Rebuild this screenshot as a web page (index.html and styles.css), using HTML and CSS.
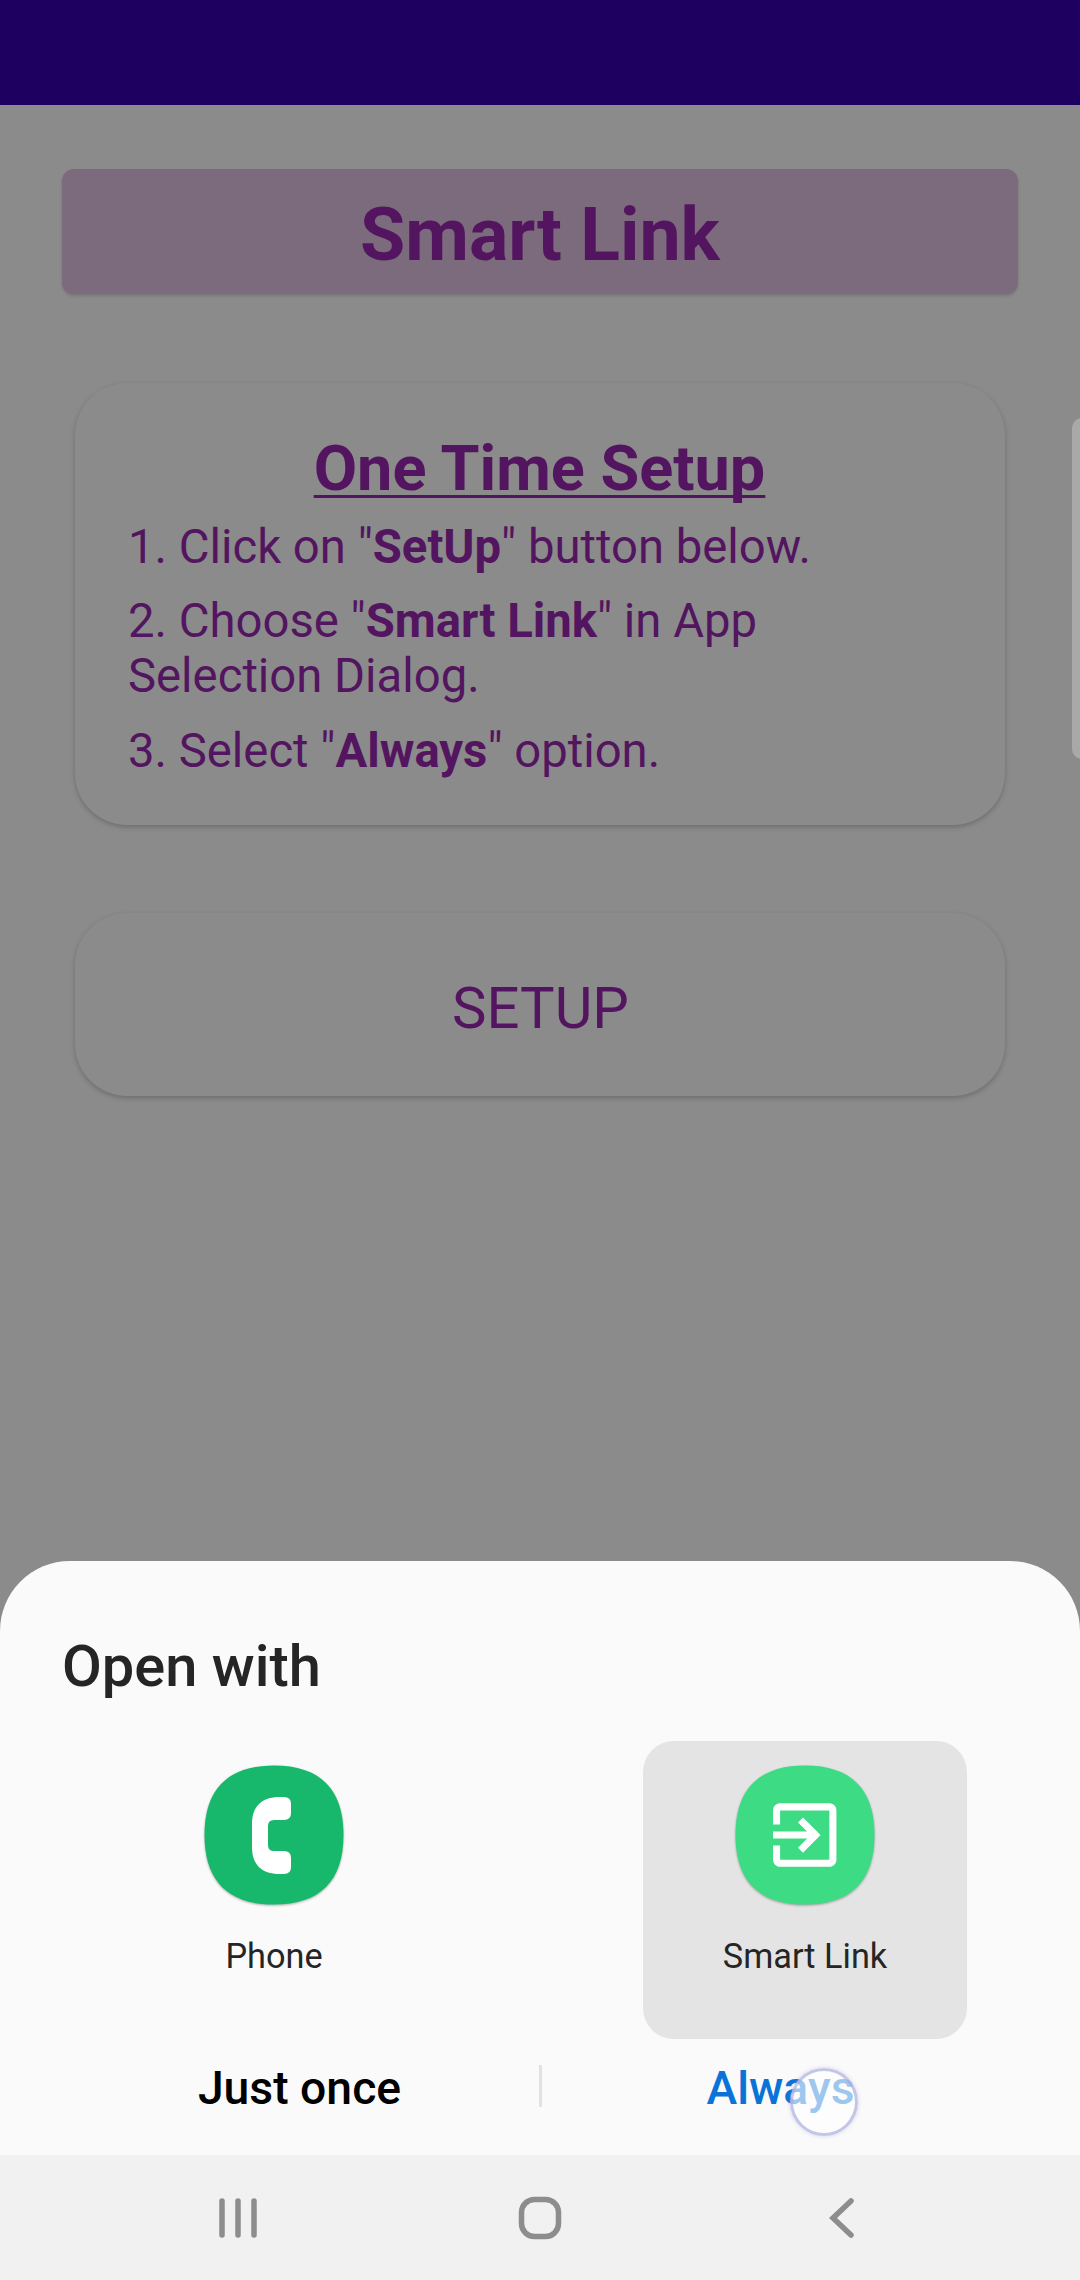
FILE: index.html
```html
<!DOCTYPE html>
<html lang="en">
  <head>
    <meta charset="UTF-8" />
    <meta name="viewport" content="width=device-width, initial-scale=1.0" />
    <title>Smart Link</title>
    <link rel="stylesheet" href="styles.css">
  </head>
  <body>
    <div class="status-bar"></div>
    <main>
      <h1 class="banner">Smart Link</h1>
      <section class="card steps">
        <h2>One Time Setup</h2>
        <p>1. Click on "<b>SetUp</b>" button below.</p>
        <p>2. Choose "<b>Smart Link</b>" in App<br />Selection Dialog.</p>
        <p>3. Select "<b>Always</b>" option.</p>
      </section>
      <button class="card setup">SETUP</button>
    </main>
    <div class="edge-handle"></div>

    <section class="sheet">
      <h3>Open with</h3>
      <div class="apps">
        <div class="app">
          <svg class="app-icon" viewBox="0 0 140 140">
            <path fill="#17b86b" d="M70 .5C116 .5 139.5 24 139.5 70S116 139.5 70 139.5 .5 116 .5 70 24 .5 70 .5z" />
            <path fill="#fff" d="M76 32h4q7 0 7 7v9q0 7-7 7H70q-6 0-6 6v19q0 6 6 6h10q7 0 7 7v9q0 7-7 7h-4C57 109 48 99 48 82V59C48 42 57 32 76 32z" />
          </svg>
          <span>Phone</span>
        </div>
        <div class="app selected">
          <svg class="app-icon" viewBox="0 0 140 140">
            <path fill="#3ddc84" d="M70 .5C116 .5 139.5 24 139.5 70S116 139.5 70 139.5 .5 116 .5 70 24 .5 70 .5z" />
            <path fill="#fff" transform="translate(27.5 27.8) scale(3.52)" d="M10.09 15.59L11.5 17l5-5-5-5-1.41 1.41L12.67 11H3v2h9.67l-2.58 2.59zM19 3H5c-1.11 0-2 .9-2 2v4h2V5h14v14H5v-4H3v4c0 1.1.89 2 2 2h14c1.1 0 2-.9 2-2V5c0-1.1-.9-2-2-2z" />
          </svg>
          <span>Smart Link</span>
        </div>
      </div>
      <div class="actions">
        <button>Just once</button>
        <div class="divider"></div>
        <button class="always">Always<i class="touch"></i></button>
      </div>
    </section>

    <nav>
      <svg viewBox="0 0 44 44">
        <path d="M6 5v34M22 5v34M38 5v34" />
      </svg>
      <svg viewBox="0 0 44 44">
        <rect x="3.5" y="3.5" width="37" height="37" rx="13" />
      </svg>
      <svg viewBox="0 0 44 44">
        <path d="M31 5L13 22l18 17" />
      </svg>
    </nav>
  </body>
</html>
```

FILE: styles.css
```css
* {
  padding: 0;
  margin: 0;
  box-sizing: border-box;
}
body {
  width: 1080px;
  height: 2280px;
  display: flex;
  flex-direction: column;
  position: relative;
  overflow: hidden;
  background-color: #8b8b8b;
  font-family: Roboto, sans-serif;
}
button {
  border: none;
  background: none;
  font-family: inherit;
}
.status-bar {
  height: 105px;
  background-color: #1e0060;
}
main {
  flex: 1;
  display: flex;
  flex-direction: column;
  padding: 64px 62px 0;
  color: #53155f;
}
.banner {
  height: 125px;
  border-radius: 12px;
  background-color: #7c6a7d;
  box-shadow: 0 2px 3px rgba(0, 0, 0, 0.15);
  text-align: center;
  font-size: 73.5px;
  line-height: 132px;
}
.card {
  margin: 0 13px;
  border-radius: 52px;
  background-color: #8b8b8b;
  box-shadow: 0 2px 5px rgba(0, 0, 0, 0.22);
}
.steps {
  height: 442px;
  margin-top: 89px;
  padding: 49px 54px 0 53px;
  font-size: 47.25px;
  line-height: 55px;
}
.steps h2 {
  margin-bottom: 14px;
  text-align: center;
  font-size: 63px;
  line-height: 74px;
  text-decoration: underline;
  text-decoration-thickness: 3px;
  text-underline-offset: 5px;
  text-decoration-skip-ink: none;
}
.steps p {
  margin-bottom: 19.3px;
}
.setup {
  height: 183px;
  margin-top: 88px;
  padding: 6px 0 0 1px;
  color: inherit;
  font-size: 58px;
}

/* samsung edge panel handle */
.edge-handle {
  position: absolute;
  top: 418px;
  right: -12px;
  width: 20px;
  height: 341px;
  border-radius: 12px;
  background-color: #a9a9a9;
}

.sheet {
  height: 594px;
  padding-top: 70px;
  border-radius: 70px 70px 0 0;
  background-color: #fafafa;
  color: #252525;
}
.sheet h3 {
  padding-left: 62px;
  font-size: 57.8px;
  font-weight: 500;
  line-height: 70px;
}
.apps {
  display: flex;
  justify-content: space-between;
  margin: 40px 113px 0 112px;
}
.app {
  width: 324px;
  height: 298px;
  padding-top: 24px;
  border-radius: 31px;
  display: flex;
  flex-direction: column;
  align-items: center;
  gap: 30px;
  font-size: 34.3px;
  line-height: 42px;
}
.selected {
  background-color: #e4e4e4;
}
.app-icon {
  width: 140px;
  height: 140px;
  overflow: visible;
  filter: drop-shadow(0 1px 1px rgba(0, 0, 0, 0.3));
}
.actions {
  display: flex;
  align-items: center;
  justify-content: center;
  height: 94px;
}
.actions button {
  width: 478px;
  padding-top: 3px;
  font-size: 46.3px;
  font-weight: 500;
}
.divider {
  width: 3px;
  height: 42px;
  background-color: #e2e2e2;
}
.actions .always {
  position: relative;
  color: #0a73d8;
}
.touch {
  position: absolute;
  top: 10px;
  left: 248px;
  width: 68px;
  height: 68px;
  border: 3px solid rgba(165, 168, 220, 0.65);
  border-radius: 50%;
  background-color: rgba(255, 255, 255, 0.6);
  box-shadow: 0 0 4px rgba(150, 155, 220, 0.4);
}

nav {
  height: 125px;
  display: flex;
  align-items: center;
  justify-content: center;
  gap: 258px;
  background-color: #f1f1f1;
}
nav svg {
  width: 44px;
  height: 44px;
  fill: none;
  stroke: #8d8d8d;
  stroke-width: 5.5;
  stroke-linecap: round;
}
```
